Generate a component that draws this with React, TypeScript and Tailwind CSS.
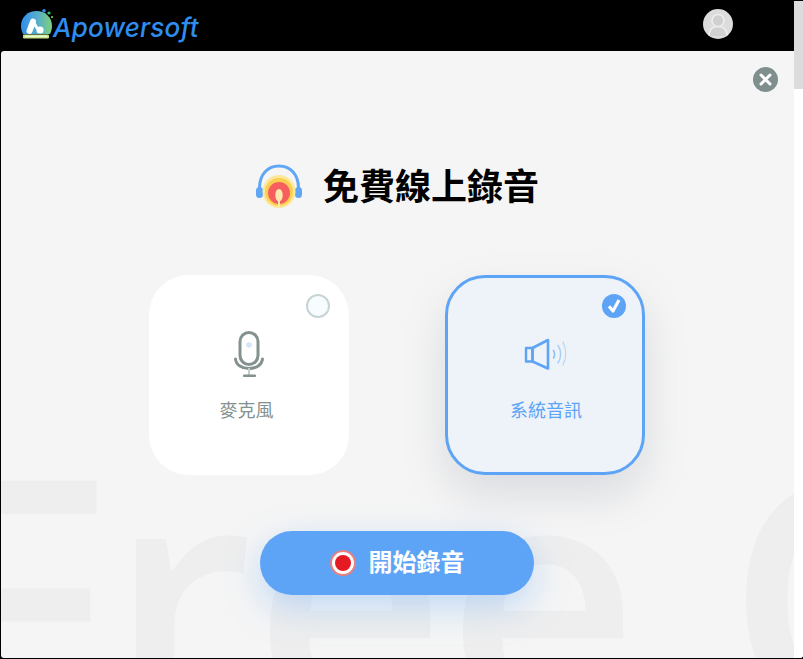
const cjk = "font-['Inter','Noto_Sans_CJK_TC',sans-serif]";

function LogoMark() {
  return (
    <svg width="34" height="34" viewBox="0 0 34 34" className="shrink-0">
      <defs>
        <linearGradient id="dome" x1="0" y1="0" x2="1" y2="0">
          <stop offset="0" stopColor="#2f8df0" />
          <stop offset="0.55" stopColor="#58b0c8" />
          <stop offset="1" stopColor="#7ed07a" />
        </linearGradient>
      </defs>
      <path d="M0 17 C0 8 7 2 15.5 2 C24 2 31 8 31 17 C31 20 30 23 29 25 L2 25 C1 23 0 20 0 17 Z" fill="url(#dome)" />
      <rect x="2" y="25.5" width="26" height="4" rx="1" fill="#c5e58a" />
      <rect x="4" y="26.5" width="22" height="1.6" fill="#eef8cf" />
      <circle cx="23" cy="1.8" r="1.8" fill="#2f8df0" />
      <circle cx="28" cy="4" r="1.6" fill="#2fc46a" />
      <circle cx="31" cy="8" r="1" fill="#8be04e" />
      <path d="M12 12.5 L8.5 22" stroke="#fff" strokeWidth="6" strokeLinecap="round" />
      <path d="M12 12.5 L16 19" stroke="#fff" strokeWidth="3" strokeLinecap="round" />
      <circle cx="19" cy="21" r="3.6" fill="#fff" />
    </svg>
  );
}

function Headset() {
  return (
    <svg width="48" height="46" viewBox="0 0 48 46">
      <path d="M4.5 24 C4.5 10 13 2 24 2 C35 2 43.5 10 43.5 24" fill="none" stroke="#5fa6f5" strokeWidth="3" />
      <rect x="1" y="23" width="7" height="11" rx="3.5" fill="#5fa6f5" />
      <rect x="40" y="23" width="7" height="11" rx="3.5" fill="#5fa6f5" />
      <circle cx="24" cy="27.5" r="16.5" fill="#fde79a" />
      <circle cx="24" cy="28" r="14" fill="#fbcf4f" />
      <circle cx="24" cy="29" r="11" fill="#f75f5f" />
      <path d="M20.3 31 C20.3 27 22 25 24 25 C26 25 27.7 27 27.7 31 C27.7 35 26 37 25 37 L25 43.5 L23 43.5 L23 37 C22 37 20.3 35 20.3 31 Z" fill="#fde9b0" />
    </svg>
  );
}

function MicIcon() {
  return (
    <svg width="32" height="48" viewBox="0 0 32 48" fill="none">
      <rect x="7" y="2.5" width="18" height="32" rx="9" stroke="#83918f" strokeWidth="3" />
      <circle cx="16" cy="15" r="2.8" fill="#d3e5fb" />
      <path d="M2.5 29 C3 35 9 38.5 16 38.5 C23 38.5 29 35 29.5 29" stroke="#83918f" strokeWidth="3" strokeLinecap="round" />
      <rect x="15" y="38" width="2" height="7" fill="#c4cecb" />
      <rect x="10" y="44.5" width="13" height="2.5" rx="1" fill="#83918f" />
    </svg>
  );
}

function SpeakerIcon() {
  return (
    <svg width="44" height="34" viewBox="0 0 44 34" fill="none">
      <rect x="3" y="10" width="6.5" height="13.5" stroke="#5ea4f6" strokeWidth="2.4" strokeLinejoin="round" />
      <path d="M9.5 10 L25 2 L25 30.5 L9.5 23.5 Z" stroke="#5ea4f6" strokeWidth="2.6" strokeLinejoin="round" />
      <path d="M30.5 12.5 C32 14.5 32 18 30.5 20" stroke="#8dbff7" strokeWidth="1.6" strokeLinecap="round" />
      <path d="M35 7.5 C38.5 12 38.5 20 35 25" stroke="#a5cdf9" strokeWidth="1.4" strokeLinecap="round" />
      <path d="M40 4 C43.5 11 43.5 20 40 27" stroke="#b5d6fa" strokeWidth="1.3" strokeLinecap="round" />
    </svg>
  );
}

export default function App() {
  return (
    <div className={`relative flex h-[659px] w-[803px] flex-col overflow-hidden bg-black ${cjk}`}>
      <header className="flex h-[51px] shrink-0 items-center pl-[21px] pr-[70px]">
        <div className="flex items-center">
          <LogoMark />
          <span className="ml-[-2px] mt-[4px] text-[26px] font-medium italic leading-none tracking-[0.2px] text-[#2f8df0]">
            Apowersoft
          </span>
        </div>
        <div className="mb-[3px] ml-auto flex h-[30px] w-[30px] items-center justify-center overflow-hidden rounded-full bg-[#dcdcdc]">
          <svg width="24" height="24" viewBox="0 0 24 24" fill="#d0d0d0" stroke="#eeeeee" strokeWidth="1.6">
            <path d="M3 24 C3 17 7 14.5 12 14.5 C17 14.5 21 17 21 24" />
            <circle cx="12" cy="8.5" r="6" />
          </svg>
        </div>
      </header>

      <main className="relative ml-px mb-px flex min-h-0 flex-1 flex-col items-center overflow-hidden rounded-[3px] bg-[#f5f5f5] pr-[10px]">
        {/* watermark sits behind everything */}
        <div className="pointer-events-none absolute left-[-71px] top-[372px] whitespace-nowrap font-['Open_Sans',sans-serif] text-[335px] font-semibold leading-[1] text-[#eeeeee] select-none">
          Free Online
        </div>

        <button className="absolute right-[25px] top-[16px] flex h-[25px] w-[25px] items-center justify-center rounded-full bg-[#7f8f8e] text-white">
          <svg width="13" height="13" viewBox="0 0 13 13" fill="none" stroke="currentColor" strokeWidth="3" strokeLinecap="round">
            <path d="M2 2 L11 11 M11 2 L2 11" />
          </svg>
        </button>

        <div className="relative mt-[113px] flex items-center">
          <Headset />
          <h1 className="ml-[20px] text-[36px] font-bold leading-[46px] text-black">免費線上錄音</h1>
        </div>

        <div className="relative mt-[65px] flex gap-[96px]">
          <div className="relative flex h-[200px] w-[200px] flex-col items-center rounded-[40px] bg-white pt-[55px]">
            <span className="absolute right-[19px] top-[19px] h-[24px] w-[24px] rounded-full border-2 border-[#c6d5d3] bg-[#f7fcff]" />
            <MicIcon />
            <span className="mt-[21px] pr-[5px] text-[18px] leading-[24px] text-[#83918f]">麥克風</span>
          </div>
          <div className="relative flex h-[200px] w-[200px] flex-col items-center rounded-[40px] border-[3px] border-[#5ea4f6] bg-[#eef2f9] pt-[60px] shadow-[0_20px_44px_rgba(110,120,140,0.2)]">
            <span className="absolute right-[16px] top-[16px] flex h-[24px] w-[24px] items-center justify-center rounded-full bg-[#5ea4f6]">
              <svg width="24" height="24" viewBox="0 0 24 24" fill="none" stroke="#fff" strokeWidth="3.2" strokeLinejoin="round">
                <path d="M7 12.3 L11 17 L17 6" />
              </svg>
            </span>
            <SpeakerIcon />
            <span className="mt-[27px] pl-[2px] text-[18px] leading-[24px] text-[#5ea4f6]">系統音訊</span>
          </div>
        </div>

        <button className="relative mt-[56px] flex h-[64px] w-[274px] shrink-0 items-center justify-center gap-[13px] rounded-[32px] bg-[#5ea4f6] text-[24px] font-bold text-white shadow-[0_12px_36px_rgba(94,164,246,0.35)]">
          <span className="flex h-[26px] w-[26px] items-center justify-center rounded-full border-2 border-[#e88080] bg-white">
            <span className="h-[16px] w-[16px] rounded-full bg-[#e51b24]" />
          </span>
          開始錄音
        </button>

        {/* scrollbar column */}
        <div className="absolute right-0 top-0 h-full w-[9px] bg-white" />
      </main>
      <div className="absolute right-0 top-px h-[88px] w-[9px] bg-[#dcdcdc]" />
    </div>
  );
}
